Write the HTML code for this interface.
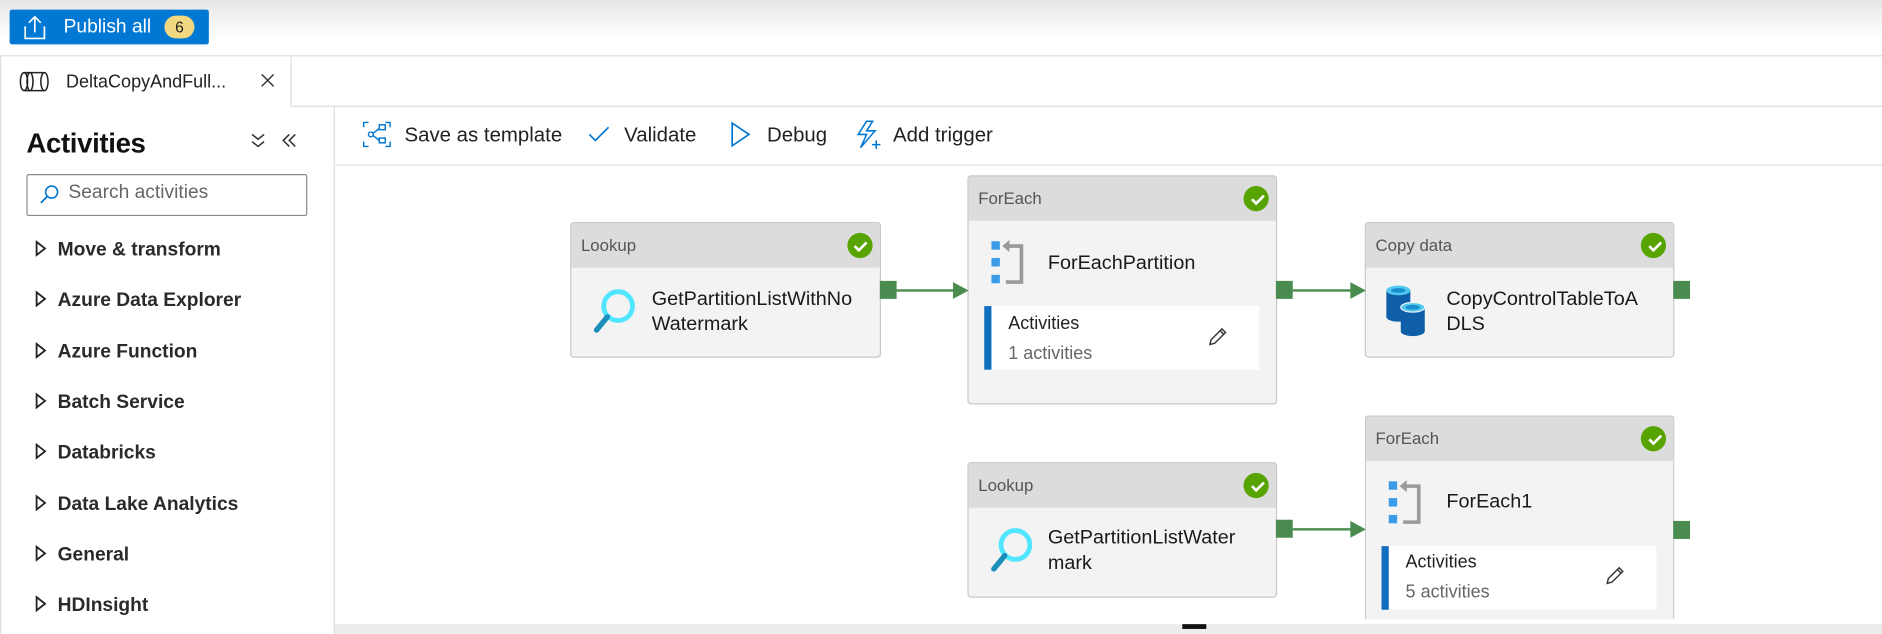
<!DOCTYPE html>
<html><head><meta charset="utf-8"><style>
html,body{margin:0;padding:0;width:1882px;height:633px;overflow:hidden;background:#fff}
#w{position:absolute;left:0;top:0;width:1568px;height:528px;transform:scale(1.2003);transform-origin:0 0;font-family:"Liberation Sans",sans-serif;color:#222}
.a{position:absolute}
.t{position:absolute;white-space:nowrap}
.node{position:absolute;background:#f3f3f3;border:1px solid #c8c8c8;border-radius:3px;box-sizing:border-box;overflow:hidden}
.hd{position:absolute;left:0;top:0;right:0;height:37px;background:#dcdcdc}
.hd span{position:absolute;left:8px;top:10px;font-size:14px;color:#555}
.ok{position:absolute;right:6px;top:8px;width:21px;height:21px;border-radius:50%;background:#57a300}
.nm{position:absolute;font-size:16.5px;line-height:21px;color:#1a1a1a}
.pn{position:absolute;background:#fff;border-left:6px solid #106ebe}
.cn{position:absolute;width:14px;height:15px;background:#4a8c50}
.ln{position:absolute;height:2px;background:#4a8c50}
.ar{position:absolute;width:0;height:0;border-top:7px solid transparent;border-bottom:7px solid transparent;border-left:13px solid #4a8c50}
.cat{position:absolute;left:29px;font-size:16px;font-weight:bold;color:#2a2a2a}
.cat svg{margin-right:9px;position:relative;top:1px}
</style></head><body><div id="w">
<div class="a" style="left:0;top:0;width:1568px;height:46px;background:linear-gradient(#e6e6e6,#fff 70%)"></div>
<div class="a" style="left:8px;top:8px;width:166px;height:29px;background:#0078d4;border-radius:2px"></div>
<svg class="a" style="left:18px;top:12px" width="22" height="22" viewBox="0 0 22 22"><path d="M11 15V2M6 7l5-5 5 5M3 10v10h16V10" fill="none" stroke="#fff" stroke-width="1.4"/></svg>
<div class="t" style="left:53px;top:14px;font-size:16px;color:#fff">Publish all</div>
<div class="a" style="left:137px;top:13px;width:25px;height:19px;border-radius:10px;background:#f3d882;font-size:13px;text-align:center;line-height:19px;color:#222">6</div>
<div class="a" style="left:0;top:46px;width:1568px;height:1px;background:#ddd"></div>
<div class="a" style="left:3px;top:47px;width:239px;height:42px;background:#fff;border-right:1px solid #ddd"></div>
<div class="a" style="left:243px;top:88px;width:1325px;height:1px;background:#ddd"></div>
<svg class="a" style="left:16px;top:59px" width="26" height="18" viewBox="0 0 26 18"><g fill="none" stroke="#222" stroke-width="1.3"><ellipse cx="4" cy="9" rx="3" ry="7.5"/><ellipse cx="21" cy="9" rx="3" ry="7.5"/><path d="M4 1.5h17M4 16.5h17"/><ellipse cx="9" cy="9" rx="2.5" ry="7.5"/></g></svg>
<div class="t" style="left:55px;top:60px;font-size:15px;color:#222">DeltaCopyAndFull...</div>
<svg class="a" style="left:217px;top:61px" width="12" height="12"><path d="M1 1l10 10M11 1L1 11" stroke="#333" stroke-width="1.2"/></svg>
<div class="a" style="left:0;top:47px;width:1px;height:481px;background:#ddd"></div>
<div class="a" style="left:278px;top:89px;width:1px;height:439px;background:#ddd"></div>
<div class="t" style="left:22px;top:106px;font-size:23px;font-weight:bold;color:#111;letter-spacing:-0.3px">Activities</div>
<svg class="a" style="left:208px;top:110px" width="14" height="14"><path d="M2 2l5 4 5-4M2 8l5 4 5-4" fill="none" stroke="#333" stroke-width="1.3"/></svg>
<svg class="a" style="left:234px;top:110px" width="14" height="14"><path d="M7 2L2 7l5 5M12 2L7 7l5 5" fill="none" stroke="#333" stroke-width="1.3"/></svg>
<div class="a" style="left:22px;top:145px;width:232px;height:33px;border:1px solid #8a8a8a;border-radius:2px"></div>
<svg class="a" style="left:32px;top:153px" width="18" height="18"><circle cx="11" cy="7" r="5" fill="none" stroke="#0078d4" stroke-width="1.3"/><path d="M7.5 10.5L2 16" stroke="#0078d4" stroke-width="1.4"/></svg>
<div class="t" style="left:57px;top:152px;font-size:16px;color:#666">Search activities</div>
<div class="cat" style="top:199px"><svg width="10" height="14"><path d="M1.5 1.5v11L8.5 7z" fill="none" stroke="#222" stroke-width="1.5"/></svg>Move &amp; transform</div>
<div class="cat" style="top:241px"><svg width="10" height="14"><path d="M1.5 1.5v11L8.5 7z" fill="none" stroke="#222" stroke-width="1.5"/></svg>Azure Data Explorer</div>
<div class="cat" style="top:284px"><svg width="10" height="14"><path d="M1.5 1.5v11L8.5 7z" fill="none" stroke="#222" stroke-width="1.5"/></svg>Azure Function</div>
<div class="cat" style="top:326px"><svg width="10" height="14"><path d="M1.5 1.5v11L8.5 7z" fill="none" stroke="#222" stroke-width="1.5"/></svg>Batch Service</div>
<div class="cat" style="top:368px"><svg width="10" height="14"><path d="M1.5 1.5v11L8.5 7z" fill="none" stroke="#222" stroke-width="1.5"/></svg>Databricks</div>
<div class="cat" style="top:411px"><svg width="10" height="14"><path d="M1.5 1.5v11L8.5 7z" fill="none" stroke="#222" stroke-width="1.5"/></svg>Data Lake Analytics</div>
<div class="cat" style="top:453px"><svg width="10" height="14"><path d="M1.5 1.5v11L8.5 7z" fill="none" stroke="#222" stroke-width="1.5"/></svg>General</div>
<div class="cat" style="top:495px"><svg width="10" height="14"><path d="M1.5 1.5v11L8.5 7z" fill="none" stroke="#222" stroke-width="1.5"/></svg>HDInsight</div>
<div class="a" style="left:279px;top:137px;width:1289px;height:1px;background:#e0e0e0"></div>
<svg class="a" style="left:302px;top:101px" width="24" height="22" viewBox="0 0 24 22"><g fill="none" stroke="#0078d4" stroke-width="1.2"><path d="M1 5V1h4M19 1h4v4M23 17v4h-4M5 21H1v-4"/><rect x="14" y="3" width="5" height="4"/><rect x="14" y="14" width="5" height="4"/><circle cx="7" cy="11" r="2"/><path d="M9 10l5-4M9 12l5 4"/></g></svg>
<div class="t" style="left:337px;top:103px;font-size:17px">Save as template</div>
<svg class="a" style="left:489px;top:104px" width="20" height="16"><path d="M2 8l5 5L18 2" fill="none" stroke="#0078d4" stroke-width="1.4"/></svg>
<div class="t" style="left:520px;top:103px;font-size:17px">Validate</div>
<svg class="a" style="left:608px;top:101px" width="18" height="22"><path d="M2 1.5v19L16 11z" fill="none" stroke="#0078d4" stroke-width="1.4"/></svg>
<div class="t" style="left:639px;top:103px;font-size:17px">Debug</div>
<svg class="a" style="left:712px;top:100px" width="24" height="26" viewBox="0 0 24 26"><g fill="none" stroke="#0078d4" stroke-width="1.3"><path d="M10 1L3 12h7l-5 11 12-14h-7l5-8z"/><path d="M18 17v7M14.5 20.5h7"/></g></svg>
<div class="t" style="left:744px;top:103px;font-size:17px">Add trigger</div>
<div class="a" style="left:279px;top:520px;width:1289px;height:8px;background:#ececec"></div>
<div class="a" style="left:985px;top:520px;width:20px;height:4px;background:#111"></div>

<div class="node" style="left:475px;top:185px;width:259px;height:113px"><div class="hd"><span>Lookup</span><div class="ok"></div></div></div>
<div class="nm" style="left:543px;top:239px">GetPartitionListWithNo<br>Watermark</div>
<div class="node" style="left:806px;top:146px;width:258px;height:191px"><div class="hd"><span>ForEach</span><div class="ok"></div></div></div>
<div class="nm" style="left:873px;top:209px">ForEachPartition</div>
<div class="pn" style="left:820px;top:255px;width:223px;height:53px"></div>
<div class="t" style="left:840px;top:261px;font-size:15px">Activities</div>
<div class="t" style="left:840px;top:286px;font-size:15px;color:#666">1 activities</div>
<div class="node" style="left:1137px;top:185px;width:258px;height:113px"><div class="hd"><span>Copy data</span><div class="ok"></div></div></div>
<div class="nm" style="left:1205px;top:239px">CopyControlTableToA<br>DLS</div>
<div class="node" style="left:806px;top:385px;width:258px;height:113px"><div class="hd"><span>Lookup</span><div class="ok"></div></div></div>
<div class="nm" style="left:873px;top:438px">GetPartitionListWater<br>mark</div>
<div class="node" style="left:1137px;top:346px;width:258px;height:170px;border-bottom:none;border-radius:3px 3px 0 0"><div class="hd"><span>ForEach</span><div class="ok"></div></div></div>
<div class="nm" style="left:1205px;top:408px">ForEach1</div>
<div class="pn" style="left:1151px;top:455px;width:223px;height:53px"></div>
<div class="t" style="left:1171px;top:460px;font-size:15px">Activities</div>
<div class="t" style="left:1171px;top:485px;font-size:15px;color:#666">5 activities</div>

<svg class="a" style="left:0;top:0;overflow:visible" width="1568" height="528">
<defs>
<g id="ck"><path d="M-5 0l3.5 3.5L5-3" fill="none" stroke="#fff" stroke-width="2.2"/></g>
<g id="mg"><circle cx="22" cy="15" r="12" fill="none" stroke="#50e6ff" stroke-width="4"/><path d="M13 24L4 35" stroke="#1b8fba" stroke-width="4.5" stroke-linecap="round"/></g>
<g id="fe"><rect x="0" y="0" width="7" height="7" fill="#3a9ce8"/><rect x="0" y="14" width="7" height="7" fill="#3a9ce8"/><rect x="0" y="28" width="7" height="7" fill="#3a9ce8"/><path d="M13 4h12v30H12" fill="none" stroke="#999" stroke-width="3"/><path d="M9 4l6-5v10z" fill="#999"/></g>
<g id="pc"><path d="M2 16l1-4L12 3l3 3-9 9zM10.5 4.5l3 3" fill="none" stroke="#333" stroke-width="1.2"/></g>
</defs>
<use href="#ck" x="717" y="205"/><use href="#ck" x="1048" y="166"/><use href="#ck" x="1379" y="205"/><use href="#ck" x="1048" y="405"/><use href="#ck" x="1379" y="366"/>
<use href="#mg" x="493" y="240"/><use href="#mg" x="824" y="439"/>
<use href="#fe" x="826" y="201"/><use href="#fe" x="1157" y="401"/>
<use href="#pc" x="1006" y="271"/><use href="#pc" x="1337" y="470"/>
<g transform="translate(1155,237)"><path d="M0 5v22a10 4 0 0 0 20 0V5" fill="#0f5fa8"/><ellipse cx="10" cy="5" rx="10" ry="4" fill="#50c8f0"/><ellipse cx="10" cy="5" rx="6" ry="2" fill="#1a8fd0"/><path d="M12 19v20a10 4 0 0 0 20 0V19" fill="#0f5fa8"/><ellipse cx="22" cy="19" rx="10" ry="4" fill="#50c8f0" stroke="#f3f3f3" stroke-width="1"/><ellipse cx="22" cy="19" rx="6" ry="2" fill="#1a8fd0"/></g>
</svg>
<div class="cn" style="left:733px;top:234px"></div><div class="ln" style="left:747px;top:241px;width:50px"></div><div class="ar" style="left:794px;top:235px"></div>
<div class="cn" style="left:1063px;top:234px"></div><div class="ln" style="left:1077px;top:241px;width:51px"></div><div class="ar" style="left:1125px;top:235px"></div>
<div class="cn" style="left:1394px;top:234px"></div>
<div class="cn" style="left:1063px;top:433px"></div><div class="ln" style="left:1077px;top:440px;width:51px"></div><div class="ar" style="left:1125px;top:434px"></div>
<div class="cn" style="left:1394px;top:434px"></div>
</div></body></html>
